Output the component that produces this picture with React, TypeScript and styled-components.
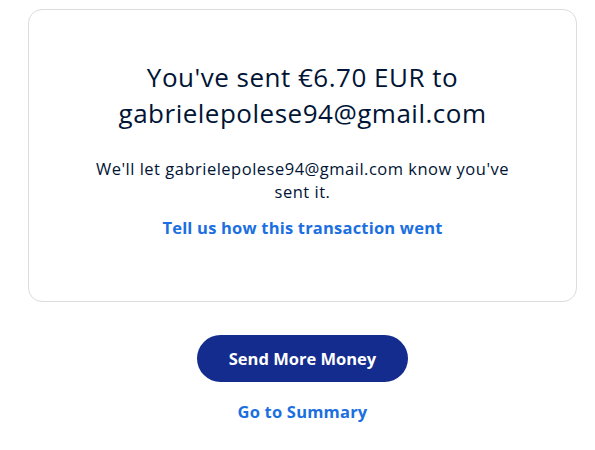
import React from 'react';
import styled, { createGlobalStyle } from 'styled-components';

const GlobalStyle = createGlobalStyle`
  html, body {
    margin: 0;
    padding: 0;
    background: #ffffff;
    font-family: "Open Sans", Lato, "Liberation Sans", sans-serif;
    color: #001435;
  }
`;

const Page = styled.div`
  display: flex;
  flex-direction: column;
  align-items: center;
  width: 595px;
  padding: 9px 0 0 10px;
  box-sizing: border-box;
`;

const Card = styled.div`
  box-sizing: border-box;
  width: 549px;
  height: 293px;
  border: 1px solid #dcdcdc;
  border-radius: 14px;
  display: flex;
  flex-direction: column;
  align-items: center;
  padding: 49px 40px 0;
  text-align: center;
`;

const Heading = styled.h1`
  margin: 0;
  font-size: 26px;
  font-weight: 400;
  line-height: 36px;
  letter-spacing: 0.5px;
  color: #001435;
  max-width: 440px;
`;

const Message = styled.p`
  margin: 26px 0 0;
  font-size: 16.5px;
  line-height: 23px;
  letter-spacing: 0.5px;
  max-width: 430px;
  color: #001435;
`;

const TextLink = styled.a`
  display: inline-block;
  font-size: 16.5px;
  line-height: 22px;
  font-weight: 700;
  letter-spacing: 0.2px;
  color: #1b6fe0;
  text-decoration: none;
  cursor: pointer;
`;

const FeedbackLink = styled(TextLink)`
  margin-top: 14px;
`;

const PrimaryButton = styled.button`
  margin-top: 33px;
  width: 211px;
  height: 47px;
  border: 0;
  border-radius: 24px;
  background: #142c8e;
  color: #ffffff;
  font-family: inherit;
  font-size: 16.5px;
  font-weight: 700;
  cursor: pointer;
`;

const SummaryLink = styled(TextLink)`
  margin-top: 19px;
`;

export default function App() {
  return (
    <>
      <GlobalStyle />
      <Page>
        <Card>
          <Heading>You've sent €6.70 EUR to gabrielepolese94@gmail.com</Heading>
          <Message>We'll let gabrielepolese94@gmail.com know you've sent it.</Message>
          <FeedbackLink>Tell us how this transaction went</FeedbackLink>
        </Card>
        <PrimaryButton>Send More Money</PrimaryButton>
        <SummaryLink>Go to Summary</SummaryLink>
      </Page>
    </>
  );
}
